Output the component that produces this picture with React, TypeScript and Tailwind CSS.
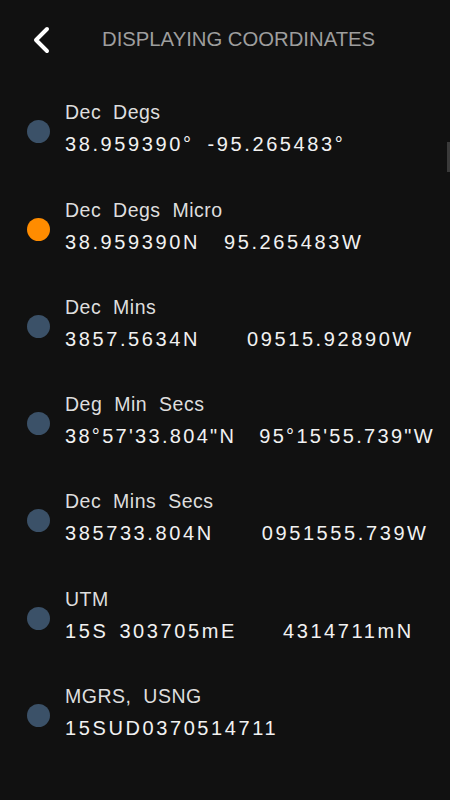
import React from 'react';

interface Coord {
  label: string;
  parts: { text: string; gap: string }[];
  active?: boolean;
  tight?: boolean;
}

const coords: Coord[] = [
  { label: 'Dec Degs', parts: [{ text: '38.959390°', gap: '' }, { text: '-95.265483°', gap: 'ml-[14px]' }] },
  { label: 'Dec Degs Micro', active: true, parts: [{ text: '38.959390N', gap: '' }, { text: '95.265483W', gap: 'ml-[24px]' }] },
  { label: 'Dec Mins', parts: [{ text: '3857.5634N', gap: '' }, { text: '09515.92890W', gap: 'ml-[47px]' }] },
  { label: 'Deg Min Secs', tight: true, parts: [{ text: '38°57\'33.804"N', gap: '' }, { text: '95°15\'55.739"W', gap: 'ml-[23px]' }] },
  { label: 'Dec Mins Secs', parts: [{ text: '385733.804N', gap: '' }, { text: '0951555.739W', gap: 'ml-[48px]' }] },
  { label: 'UTM', parts: [{ text: '15S', gap: '' }, { text: '303705mE', gap: 'ml-[11px]' }, { text: '4314711mN', gap: 'ml-[46px]' }] },
  { label: 'MGRS, USNG', parts: [{ text: '15SUD0370514711', gap: '' }] },
];

const CoordRow: React.FC<{ item: Coord }> = ({ item }) => (
  <div className="flex items-start h-[64px]">
    <div
      className={`ml-[27px] mt-[24px] w-[23px] h-[23px] rounded-full shrink-0 ${
        item.active ? 'bg-[#ff8c00]' : 'bg-[#3b5168]'
      }`}
    ></div>
    <div className="ml-[15px] flex flex-col">
      <span className="text-[19.5px] leading-[32px] text-[#dedede] tracking-[0.5px] [word-spacing:6px]">
        {item.label}
      </span>
      <div
        className={`flex text-[20px] leading-[32px] text-[#f2f2f2] whitespace-pre ${
          item.tight ? 'tracking-[2.3px]' : 'tracking-[2.6px]'
        }`}
      >
        {item.parts.map((p, i) => (
          <span key={i} className={p.gap}>
            {p.text}
          </span>
        ))}
      </div>
    </div>
  </div>
);

const App: React.FC = () => {
  return (
    <div className="w-[450px] h-[800px] bg-[#111111] relative overflow-hidden font-['Liberation_Sans',sans-serif]">
      {/* Header */}
      <div className="h-[80px] flex items-center">
        <svg width="20" height="30" viewBox="0 0 20 30" className="ml-[31px] shrink-0">
          <polyline
            points="16,4 5,15 16,26"
            fill="none"
            stroke="#ffffff"
            strokeWidth="4"
            strokeLinecap="round"
            strokeLinejoin="round"
          />
        </svg>
        <h1 className="ml-[51px] -mt-[2px] text-[20.3px] leading-[22px] text-[#9e9e9e] uppercase">
          Displaying Coordinates
        </h1>
      </div>

      {/* Coordinate formats */}
      <div className="pt-[16.3px] flex flex-col gap-[33.3px]">
        {coords.map((c) => (
          <CoordRow key={c.label} item={c} />
        ))}
      </div>

      {/* Scroll indicator */}
      <div className="absolute right-0 top-[142px] w-[3px] h-[30px] bg-[#3a3a3a]"></div>
    </div>
  );
};

export default App;
